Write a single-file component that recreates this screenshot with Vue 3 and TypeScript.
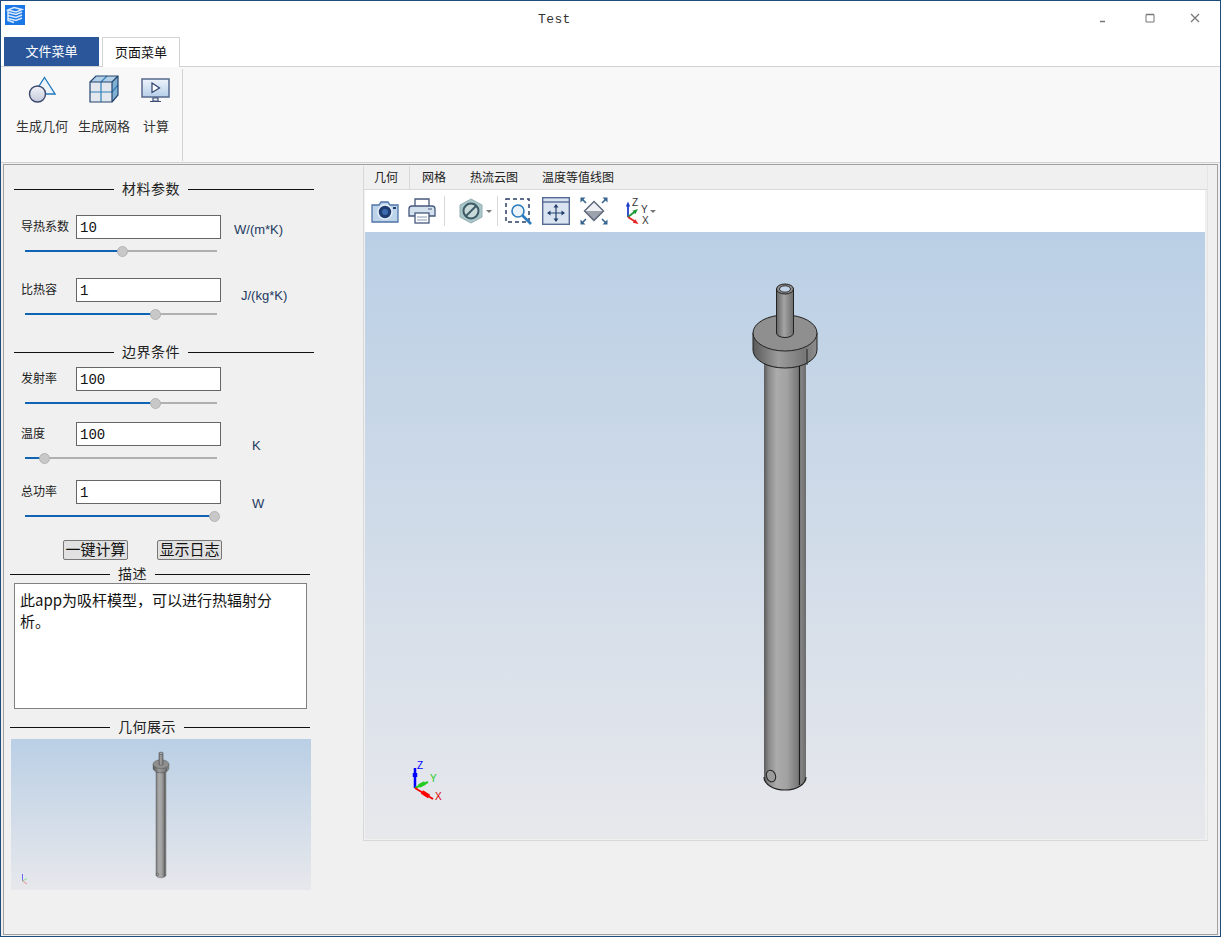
<script setup lang="ts">
interface Param {
  label: string;
  value: string;
  unit: string;
  pct: number;
  top: number; // gap above the row
  unitLeft: number;
  unitTop: number;
}

const materialParams: Param[] = [
  { label: "导热系数", value: "10", unit: "W/(m*K)", pct: 51, top: 16, unitLeft: 13, unitTop: 7 },
  { label: "比热容", value: "1", unit: "J/(kg*K)", pct: 68, top: 21, unitLeft: 20, unitTop: 10 },
];

const boundaryParams: Param[] = [
  { label: "发射率", value: "100", unit: "", pct: 68, top: 5, unitLeft: 0, unitTop: 0 },
  { label: "温度", value: "100", unit: "K", pct: 10, top: 13, unitLeft: 31, unitTop: 16 },
  { label: "总功率", value: "1", unit: "W", pct: 98.8, top: 16, unitLeft: 31, unitTop: 16 },
];

const viewTabs = ["几何", "网格", "热流云图", "温度等值线图"];
const description = "此app为吸杆模型，可以进行热辐射分析。";
</script>

<template>
  <div class="window">
    <svg class="defs" width="0" height="0">
      <defs>
        <linearGradient id="rodShade" x1="0" x2="1" y1="0" y2="0">
          <stop offset="0" stop-color="#5c5c5c" />
          <stop offset="0.12" stop-color="#8c8c8c" />
          <stop offset="0.3" stop-color="#ababab" />
          <stop offset="0.55" stop-color="#a2a2a2" />
          <stop offset="0.83" stop-color="#757575" />
          <stop offset="0.84" stop-color="#8c8c8c" />
          <stop offset="1" stop-color="#6c6c6c" />
        </linearGradient>
        <linearGradient id="diskShade" x1="0" x2="1" y1="0" y2="0">
          <stop offset="0" stop-color="#5a5a5a" />
          <stop offset="0.4" stop-color="#9c9c9c" />
          <stop offset="0.8" stop-color="#777" />
          <stop offset="1" stop-color="#8d8d8d" />
        </linearGradient>
        <linearGradient id="tubeShade" x1="0" x2="1" y1="0" y2="0">
          <stop offset="0" stop-color="#666" />
          <stop offset="0.45" stop-color="#a4a4a4" />
          <stop offset="1" stop-color="#6c6c6c" />
        </linearGradient>
        <linearGradient id="screenShade" x1="0" x2="0" y1="0" y2="1">
          <stop offset="0" stop-color="#eef4fb" />
          <stop offset="1" stop-color="#b6cfe8" />
        </linearGradient>
        <linearGradient id="ballShade" x1="0" x2="0" y1="0" y2="1">
          <stop offset="0" stop-color="#f2f3f7" />
          <stop offset="1" stop-color="#c4cada" />
        </linearGradient>
        <symbol id="rodModel" viewBox="365 232 840 607">
          <path d="M764 358V777A21 13 0 0 0 806 777V358Z" fill="url(#rodShade)" />
          <path d="M764 777A21 13 0 0 0 806 777" fill="none" stroke="#222" stroke-width="1.200" />
          <path d="M799.500 366V785" fill="none" stroke="#1c1c1c" stroke-width="1.200" />
          <path d="M764 362A21 6 0 0 0 799 366" fill="none" stroke="#222" />
          <ellipse cx="771" cy="776" rx="4.500" ry="6" transform="rotate(-20 771 776)" fill="#9b9b9b" stroke="#222" />
          <path d="M753 333V350A32 18 0 0 0 817 350V333Z" fill="url(#diskShade)" stroke="#222" />
          <ellipse cx="785" cy="333" rx="32" ry="18" fill="#8f8f8f" stroke="#222" />
          <path d="M807 349V365" stroke="#222" fill="none" />
          <path d="M776.500 289V333A8.500 4.500 0 0 0 793.500 333V289Z" fill="url(#tubeShade)" stroke="#222" />
          <ellipse cx="785" cy="289" rx="8.500" ry="5" fill="#8d8d8d" stroke="#222" />
          <ellipse cx="785" cy="289" rx="5.500" ry="3.200" fill="#c2d4e8" stroke="#333" />
        </symbol>
      </defs>
    </svg>

    <header class="titlebar">
      <svg class="app-logo" viewBox="0 0 20 20">
        <rect width="20" height="20" fill="#1a78e6" />
        <path d="M3 5 9 2.500 17 4.500 11 7ZM3 7.500 11 9.500 17 7M3 10.500 11 12.500 17 10M3 13.500 11 15.500 17 13M3 5V15.500L9 17.500" fill="none" stroke="#d9e9fb" stroke-width="1.500" />
      </svg>
      <span class="title">Test</span>
      <div class="win-buttons">
        <svg width="10" height="10" viewBox="0 0 10 10"><path d="M0 8.500H5" stroke="#777" stroke-width="1.500" /></svg>
        <svg width="10" height="10" viewBox="0 0 10 10"><path d="M1 1.500H9V9H1Z" fill="none" stroke="#777" /><path d="M1 1.500H9" stroke="#777" stroke-width="1.500" /></svg>
        <svg width="10" height="10" viewBox="0 0 10 10"><path d="M1 1 9 9M9 1 1 9" stroke="#777" stroke-width="1.200" /></svg>
      </div>
    </header>

    <nav class="menu-tabs">
      <button class="file-tab">文件菜单</button>
      <button class="page-tab">页面菜单</button>
    </nav>

    <section class="ribbon">
      <div class="ribbon-group">
        <div class="ribbon-btn geo">
          <svg width="28" height="28" viewBox="0 0 28 28">
            <path d="M16.500 1.500 27 18H6Z" fill="#eef5fb" stroke="#2178bd" stroke-width="1.300" />
            <circle cx="9.500" cy="18" r="8" fill="url(#ballShade)" stroke="#3c4a70" stroke-width="1.400" />
          </svg>
          <span>生成几何</span>
        </div>
        <div class="ribbon-btn mesh">
          <svg width="30" height="30" viewBox="0 0 30 30">
            <path d="M1 8H23V28H1Z" fill="#e3e8ee" />
            <path d="M1 8 7 2H29L23 8Z" fill="#b4d0e6" />
            <path d="M23 8 29 2V21L23 28Z" fill="#7fb0d2" />
            <path d="M12 8V28M1 18H23M12 8 18 2M23 18 29 11" fill="none" stroke="#2f7fb8" stroke-width="1.200" />
            <path d="M1 8H23V28H1ZM1 8 7 2H29V21L23 28M23 8 29 2" fill="none" stroke="#24456f" stroke-width="1.200" />
          </svg>
          <span>生成网格</span>
        </div>
        <div class="ribbon-btn calc">
          <svg width="30" height="26" viewBox="0 0 30 26">
            <rect x="1" y="1" width="27" height="18" fill="url(#screenShade)" stroke="#56688c" stroke-width="1.500" />
            <path d="M11 5 18.500 10 11 14.500Z" fill="#fff" stroke="#2c3f6c" stroke-width="1.200" />
            <path d="M12 20H17V23H12ZM9 23.500H20" fill="none" stroke="#3c4f78" stroke-width="1.200" />
          </svg>
          <span>计算</span>
        </div>
      </div>
    </section>

    <main class="main-frame">
      <aside class="side">
        <div class="heading">
          <i></i><span>材料参数</span><i></i>
        </div>
        <div v-for="p in materialParams" :key="p.label" class="param" :style="{ marginTop: p.top + 'px' }">
          <div class="param-row">
            <label class="param-label">{{ p.label }}</label>
            <input class="param-input" :value="p.value" />
            <span class="param-unit" :style="{ marginLeft: p.unitLeft + 'px', marginTop: p.unitTop + 'px' }">{{ p.unit }}</span>
          </div>
          <div class="slider">
            <div class="fill" :style="{ width: p.pct + '%' }"></div>
            <div class="thumb"></div>
            <div class="rest"></div>
          </div>
        </div>

        <div class="heading second">
          <i></i><span>边界条件</span><i></i>
        </div>
        <div v-for="p in boundaryParams" :key="p.label" class="param" :style="{ marginTop: p.top + 'px' }">
          <div class="param-row">
            <label class="param-label">{{ p.label }}</label>
            <input class="param-input" :value="p.value" />
            <span class="param-unit" :style="{ marginLeft: p.unitLeft + 'px', marginTop: p.unitTop + 'px' }">{{ p.unit }}</span>
          </div>
          <div class="slider">
            <div class="fill" :style="{ width: p.pct + '%' }"></div>
            <div class="thumb"></div>
            <div class="rest"></div>
          </div>
        </div>

        <div class="actions">
          <button>一键计算</button>
          <button>显示日志</button>
        </div>

        <div class="heading desc">
          <i></i><span>描述</span><i></i>
        </div>
        <textarea class="desc-box" readonly :value="description"></textarea>

        <div class="heading geo-title">
          <i></i><span>几何展示</span><i></i>
        </div>
        <div class="preview">
          <svg class="preview-model" viewBox="0 0 840 607">
            <use href="#rodModel" width="840" height="607" />
          </svg>
          <svg class="preview-triad" width="10" height="12" viewBox="0 0 10 12">
            <path d="M1.500 1V8" stroke="#6a6af0" stroke-width="1" />
            <path d="M1.500 8 6 5.500" stroke="#8fdc9a" stroke-width="1" />
            <path d="M1.500 8 6 11" stroke="#ef8f8f" stroke-width="1" />
          </svg>
        </div>
      </aside>

      <section class="viewer">
        <div class="view-tabs">
          <span v-for="(t, i) in viewTabs" :key="t" class="view-tab" :class="{ active: i === 0 }">{{ t }}</span>
        </div>
        <div class="toolbar">
          <svg class="tool" width="28" height="24" viewBox="0 0 28 24">
            <path d="M1 6H8L10 3H17L19 6H27V23H1Z" fill="#bcd3ea" stroke="#4f74a8" stroke-width="1.300" />
            <circle cx="14" cy="13" r="7" fill="#1f3d70" stroke="#e6eef8" stroke-width="1.500" />
            <circle cx="14" cy="13" r="3" fill="#3c6cb0" />
            <rect x="22" y="8" width="3" height="2" fill="#1f3d70" />
          </svg>
          <svg class="tool print" width="28" height="26" viewBox="0 0 28 26">
            <path d="M7 8V1H21V8" fill="#fff" stroke="#46587c" stroke-width="1.300" />
            <path d="M4 8H24Q27 8 27 11V18H1V11Q1 8 4 8Z" fill="#d3e1ef" stroke="#46587c" stroke-width="1.300" />
            <rect x="7" y="15" width="14" height="10" fill="#fff" stroke="#46587c" stroke-width="1.300" />
            <path d="M9 19H19M9 22H19" stroke="#8899b4" />
            <path d="M20 11H24" stroke="#46587c" />
          </svg>
          <i class="sep"></i>
          <svg class="tool hex" width="24" height="26" viewBox="0 0 24 26">
            <path d="M12 1 23 7V19L12 25 1 19V7Z" fill="#a9c6c8" stroke="#93aeb2" />
            <circle cx="12" cy="13" r="7.500" fill="#c9dadb" stroke="#3d5a66" stroke-width="2" />
            <path d="M7 18 17 8" stroke="#3d5a66" stroke-width="2" />
          </svg>
          <i class="caret first"></i>
          <i class="sep second"></i>
          <svg class="tool zoom" width="28" height="27" viewBox="0 0 28 27">
            <rect x="1" y="1" width="23" height="23" fill="none" stroke="#2e3f66" stroke-width="1.500" stroke-dasharray="4 3" />
            <circle cx="13" cy="13" r="6" fill="#eaf3fb" stroke="#2b7bbd" stroke-width="1.600" />
            <path d="M17.500 17.500 26 26" stroke="#2b7bbd" stroke-width="2.600" />
          </svg>
          <svg class="tool fit" width="28" height="28" viewBox="0 0 28 28">
            <rect x="0.700" y="0.700" width="26.600" height="26.600" fill="#d9e4f0" stroke="#556b94" stroke-width="1.400" />
            <path d="M1 5H27" stroke="#556b94" stroke-width="1.400" />
            <path d="M14 8V24M6 16H22" stroke="#26406e" stroke-width="1.200" />
            <path d="M14 7 11.500 10.500H16.500ZM14 25 11.500 21.500H16.500ZM5 16 8.500 13.500V18.500ZM23 16 19.500 13.500V18.500Z" fill="#26406e" />
          </svg>
          <svg class="tool diamond" width="28" height="28" viewBox="0 0 28 28">
            <path d="M14 4.500 23.500 14H4.500Z" fill="#eef0f3" />
            <path d="M4.500 14H23.500L14 23.500Z" fill="#9da3ac" />
            <path d="M14 4.500 23.500 14 14 23.500 4.500 14Z" fill="none" stroke="#5a6478" stroke-width="1.400" />
            <path d="M0.500 0.500H5.500L0.500 5.500ZM27.500 0.500H22.500L27.500 5.500ZM0.500 27.500H5.500L0.500 22.500ZM27.500 27.500H22.500L27.500 22.500Z" fill="#36648f" />
            <path d="M2.500 2.500 6 6M25.500 2.500 22 6M2.500 25.500 6 22M25.500 25.500 22 22" stroke="#36648f" stroke-width="1.600" />
          </svg>
          <svg class="tool axes" width="25" height="30" viewBox="0 0 25 30">
            <path d="M3 21V9" stroke="#1f3fc8" stroke-width="1.800" />
            <path d="M3 5.500 0.800 10.500H5.200Z" fill="#1f3fc8" />
            <path d="M3 21 10 15.500" stroke="#1d9a3a" stroke-width="1.800" />
            <path d="M13 13 7.500 14.800 10.300 18.200Z" fill="#1d9a3a" />
            <path d="M3 21 10 25.500" stroke="#e32424" stroke-width="1.800" />
            <path d="M13.500 28 7.800 26.800 10.200 23.200Z" fill="#e32424" />
            <text x="7" y="10" class="axis-label">Z</text>
            <text x="16" y="17" class="axis-label">Y</text>
            <text x="17" y="28" class="axis-label">X</text>
          </svg>
          <i class="caret"></i>
        </div>
        <div class="viewport">
          <svg class="scene" viewBox="0 0 840 607">
            <use href="#rodModel" width="840" height="607" />
            <path d="M50 556V536" stroke="#0000ff" stroke-width="2.500" />
            <path d="M50 545V541" stroke="#0000ff" stroke-width="4.500" />
            <path d="M50 556 63 550" stroke="#22cc22" stroke-width="2" />
            <path d="M54 554 60 551" stroke="#22cc22" stroke-width="4" />
            <path d="M50 556 68 567" stroke="#ff0000" stroke-width="2" />
            <path d="M57 560 64 564.500" stroke="#ff0000" stroke-width="4" />
            <text x="52" y="537" class="triad z">Z</text>
            <text x="65" y="550" class="triad y">Y</text>
            <text x="70" y="568" class="triad x">X</text>
          </svg>
        </div>
      </section>
    </main>
  </div>
</template>

<style>
html,
body {
  margin: 0;
  background: #f0f0f0;
}
</style>

<style scoped>
.window {
  width: 1221px;
  height: 937px;
  box-sizing: border-box;
  border: 1px solid #1f4a7c;
  background: #f0f0f0;
  display: flex;
  flex-direction: column;
  font-family: "Noto Sans CJK SC", "Liberation Sans", sans-serif;
  color: #111;
  overflow: hidden;
}

.defs {
  position: absolute;
}

.titlebar {
  height: 36px;
  flex: none;
  background: #fff;
  display: flex;
  align-items: flex-start;
  position: relative;
}

.app-logo {
  width: 20px;
  height: 20px;
  margin: 4px 0 0 4px;
}

.title {
  position: absolute;
  left: 537px;
  top: 11px;
  font: 13px/16px "Liberation Mono", monospace;
  color: #333;
  letter-spacing: 0.4px;
}

.win-buttons {
  margin-left: auto;
  display: flex;
  gap: 35px;
  padding: 12px 20px 0 0;
}

.menu-tabs {
  height: 29px;
  flex: none;
  background: #fff;
  display: flex;
  align-items: flex-end;
  padding-left: 3px;
  gap: 3px;
}

.menu-tabs button {
  font: 13px/20px "Noto Sans CJK SC", sans-serif;
  border: 0;
  padding: 0 0 2px;
}

.file-tab {
  width: 95px;
  height: 29px;
  background: #2b579a;
  color: #fff;
}

.page-tab {
  width: 78px;
  height: 30px;
  background: #fff;
  color: #111;
  border: 1px solid #d2d2d2 !important;
  border-bottom: 0 !important;
  position: relative;
  top: 1px;
}

.ribbon {
  height: 97px;
  flex: none;
  box-sizing: border-box;
  background: #f8f8f8;
  border-top: 1px solid #d2d2d2;
  border-bottom: 1px solid #d2d2d2;
  padding: 2px 0 1px 2px;
  display: flex;
}

.ribbon-group {
  width: 179px;
  border-right: 1px solid #d2d2d2;
  display: flex;
  font-size: 13px;
  color: #333;
}

.ribbon-btn {
  display: flex;
  flex-direction: column;
  align-items: center;
}

.ribbon-btn span {
  line-height: 18px;
  white-space: nowrap;
}

.geo {
  width: 52px;
  margin-left: 13px;
}

.geo svg {
  margin-top: 7px;
  margin-bottom: 13px;
}

.mesh {
  width: 52px;
  margin-left: 10px;
}

.mesh svg {
  margin-top: 5px;
  margin-bottom: 13px;
}

.calc {
  width: 26px;
  margin-left: 13px;
}

.calc svg {
  margin-top: 9px;
  margin-bottom: 13px;
}

.main-frame {
  flex: 1;
  min-height: 0;
  margin: 1px 2px 1px 2px;
  border: 1px solid #a0a0a0;
  display: flex;
  background: #f0f0f0;
}

.side {
  width: 359px;
  flex: none;
  box-sizing: border-box;
  padding-top: 14px;
}

.heading {
  display: flex;
  align-items: center;
  gap: 8px;
  width: 300px;
  height: 20px;
  margin-left: 10px;
  font-size: 14px;
  letter-spacing: 0.5px;
  white-space: nowrap;
  color: #222;
}

.heading span {
  margin-top: -2px;
}

.heading i {
  flex: 1;
  height: 1px;
  background: #111;
}

.heading i:first-child {
  flex: none;
  width: 100px;
}

.heading.second {
  margin-top: 22px;
}

.heading.desc {
  margin: 7px 0 0 6px;
  height: 14px;
}

.heading.geo-title {
  margin: 8px 0 0 6px;
}

.param-row {
  display: flex;
  align-items: flex-start;
  padding-left: 17px;
  height: 24px;
}

.param-label {
  width: 55px;
  flex: none;
  font-size: 12px;
  line-height: 22px;
  color: #222;
  white-space: nowrap;
}

.param-input {
  width: 145px;
  height: 24px;
  flex: none;
  box-sizing: border-box;
  border: 1px solid #666;
  background: #fff;
  padding: 2px 0 0 3px;
  font: 14px "Liberation Mono", monospace;
  color: #111;
  outline: none;
}

.param-unit {
  font: 13px/16px "Liberation Sans", sans-serif;
  color: #223a5e;
  white-space: nowrap;
}

.slider {
  display: flex;
  align-items: center;
  width: 192px;
  height: 12px;
  margin: 6px 0 0 21px;
}

.slider .fill {
  height: 2px;
  background: #0f64b4;
}

.slider .rest {
  flex: 1;
  height: 2px;
  background: #b0b0b0;
}

.slider .thumb {
  width: 11px;
  height: 11px;
  flex: none;
  margin: 0 -5.5px;
  box-sizing: border-box;
  border: 1px solid #b4b4b4;
  border-radius: 50%;
  background: #c8c8c8;
  position: relative;
}

.actions {
  display: flex;
  gap: 29px;
  margin: 18px 0 0 59px;
}

.actions button {
  width: 65px;
  height: 20px;
  box-sizing: border-box;
  padding: 0 0 2px;
  border: 1px solid #777;
  border-radius: 2px;
  background: #e1e1e1;
  font: 15px/16px "Noto Sans CJK SC", sans-serif;
  color: #111;
}

.desc-box {
  display: block;
  width: 293px;
  height: 126px;
  box-sizing: border-box;
  margin: 2px 0 0 10px;
  border: 1px solid #808080;
  background: #fff;
  padding: 5px 24px 0 5px;
  font: 15px/21px "Noto Sans CJK SC", sans-serif;
  color: #111;
  resize: none;
  outline: none;
}

.preview {
  width: 300px;
  height: 151px;
  margin: 2px 0 0 7px;
  background: linear-gradient(#bacfe5, #e7e8ec);
  position: relative;
}

.preview-model {
  display: block;
  width: 300px;
  height: 151px;
}

.preview-triad {
  position: absolute;
  left: 10px;
  top: 134px;
}

.viewer {
  width: 845px;
  height: 675px;
  box-sizing: border-box;
  border: 1px solid #d8d8d8;
  border-top: 0;
  border-right-color: #e4e4e4;
  margin-top: 1px;
  display: flex;
  flex-direction: column;
}

.view-tabs {
  height: 24px;
  flex: none;
  display: flex;
  font-size: 12px;
  line-height: 22px;
  color: #222;
  border-bottom: 1px solid #d9d9d9;
  box-sizing: border-box;
}

.view-tab {
  padding: 0 12px;
  white-space: nowrap;
}

.view-tab.active {
  padding: 0 11px 0 10px;
  border-right: 1px solid #d9d9d9;
}

.toolbar {
  height: 42px;
  flex: none;
  background: #fff;
  margin: 0 2px 0 1px;
  display: flex;
  align-items: center;
  padding-left: 6px;
}

.print {
  margin-left: 9px;
}

.sep {
  width: 1px;
  height: 30px;
  background: #d8d8d8;
  margin-left: 8px;
}

.sep.second {
  margin-left: 5px;
}

.hex {
  margin-left: 14px;
}

.caret {
  width: 0;
  height: 0;
  border: 3px solid transparent;
  border-top: 3px solid #777;
  border-bottom: 0;
}

.caret.first {
  margin-left: 3px;
}

.zoom {
  margin-left: 7px;
}

.fit {
  margin-left: 9px;
}

.diamond {
  margin-left: 10px;
}

.axes {
  margin-left: 17px;
}

.axis-label {
  font: 10px "Liberation Sans", sans-serif;
  fill: #333;
}

.viewport {
  flex: 1;
  min-height: 0;
  margin: 0 2px 1px 1px;
  background: linear-gradient(#bacfe5, #e7e8ec);
}

.scene {
  display: block;
  width: 840px;
  height: 607px;
}

.triad {
  font: 10px "Liberation Sans", sans-serif;
}

.triad.z {
  fill: #0000ff;
}

.triad.y {
  fill: #22cc22;
}

.triad.x {
  fill: #dd0000;
}
</style>
